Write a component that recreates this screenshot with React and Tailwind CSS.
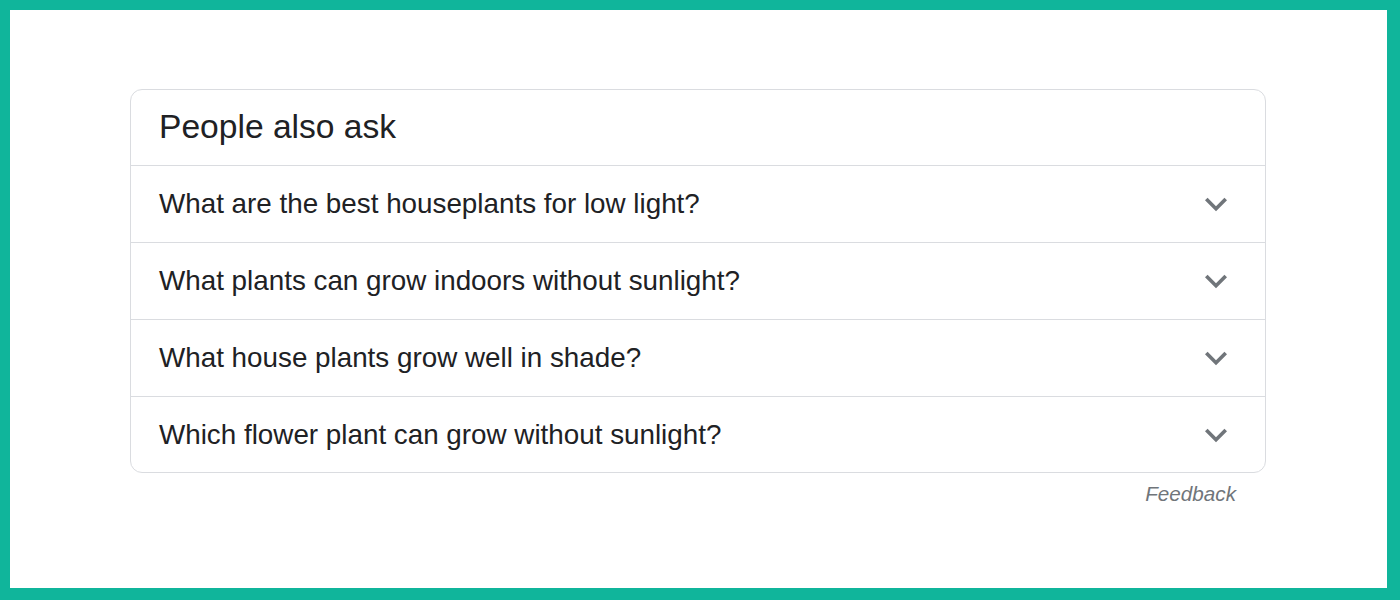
const questions = [
  'What are the best houseplants for low light?',
  'What plants can grow indoors without sunlight?',
  'What house plants grow well in shade?',
  'Which flower plant can grow without sunlight?',
];

function ExpandIcon() {
  return (
    <svg viewBox="0 0 24 24" className="w-[44px] h-[44px] fill-[#70757a]">
      <path d="M16.59 8.59L12 13.17 7.41 8.59 6 10l6 6 6-6z" />
    </svg>
  );
}

export default function App() {
  return (
    <div className="w-[1400px] h-[600px] bg-[#10b59b] pt-[10px] pl-[10px] pr-[13px] pb-[12px]">
      <div className="h-full bg-white flex flex-col items-start pl-[120px] pt-[79px] font-['Liberation_Sans',Arial,sans-serif] text-[#202124]">
        <div className="w-[1136px]">
          <div className="border border-[#dadce0] rounded-[12px]">
            <div className="h-[76px] border-b border-[#dadce0] flex items-center px-[28px]">
              <h2 className="text-[33.6px] leading-none -mt-[1px]">People also ask</h2>
            </div>
            {questions.map((q, i) => (
              <div
                key={q}
                className={
                  i < questions.length - 1
                    ? 'h-[77px] border-b border-[#dadce0] flex items-center justify-between pl-[28px] pr-[27px]'
                    : 'h-[75px] flex items-center justify-between pl-[28px] pr-[27px]'
                }
              >
                <span className="text-[27.8px] leading-none">{q}</span>
                <ExpandIcon />
              </div>
            ))}
          </div>
          <div className="flex justify-end pr-[30px] pt-[5px]">
            <span className="italic text-[20.7px] text-[#70757a]">Feedback</span>
          </div>
        </div>
      </div>
    </div>
  );
}
